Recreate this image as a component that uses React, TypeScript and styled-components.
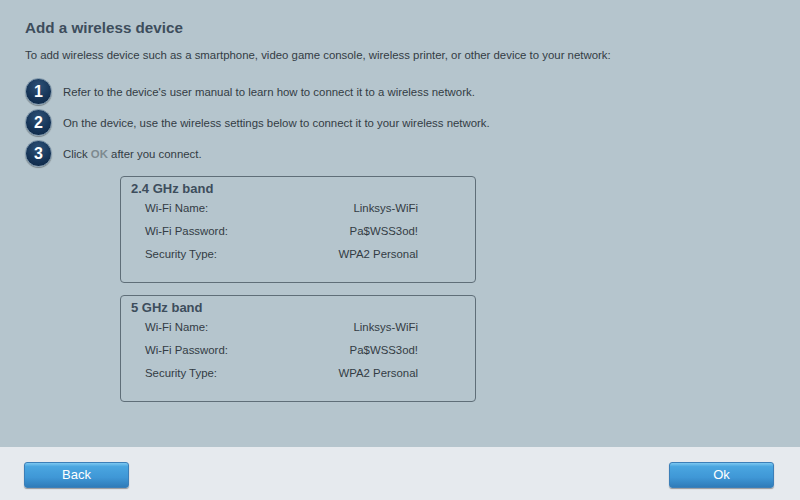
import React from "react";
import styled, { createGlobalStyle } from "styled-components";

const GlobalStyle = createGlobalStyle`
  html, body {
    margin: 0;
    padding: 0;
  }
  body {
    font-family: Arial, "Liberation Sans", sans-serif;
    background: #b5c5cd;
  }
`;

const bands = [
  { title: "2.4 GHz band", name: "Linksys-WiFi", password: "Pa$WSS3od!", security: "WPA2 Personal" },
  { title: "5 GHz band", name: "Linksys-WiFi", password: "Pa$WSS3od!", security: "WPA2 Personal" },
];

export default function App() {
  return (
    <>
      <GlobalStyle />
      <Page>
        <Content>
          <Title>Add a wireless device</Title>
          <Intro>
            To add wireless device such as a smartphone, video game console, wireless printer, or other device to
            your network:
          </Intro>
          <Steps>
            <Step>
              <StepNum>1</StepNum>
              <StepText>Refer to the device's user manual to learn how to connect it to a wireless network.</StepText>
            </Step>
            <Step>
              <StepNum>2</StepNum>
              <StepText>On the device, use the wireless settings below to connect it to your wireless network.</StepText>
            </Step>
            <Step>
              <StepNum>3</StepNum>
              <StepText>
                Click <Hint>OK</Hint> after you connect.
              </StepText>
            </Step>
          </Steps>
          <Bands>
            {bands.map((b) => (
              <BandBox key={b.title}>
                <BandTitle>{b.title}</BandTitle>
                <InfoRow>
                  <Label>Wi-Fi Name:</Label>
                  <Value>{b.name}</Value>
                </InfoRow>
                <InfoRow>
                  <Label>Wi-Fi Password:</Label>
                  <Value>{b.password}</Value>
                </InfoRow>
                <InfoRow>
                  <Label>Security Type:</Label>
                  <Value>{b.security}</Value>
                </InfoRow>
              </BandBox>
            ))}
          </Bands>
        </Content>
        <Footer>
          <Button>Back</Button>
          <Button>Ok</Button>
        </Footer>
      </Page>
    </>
  );
}

const Page = styled.div`
  width: 800px;
  height: 500px;
  display: flex;
  flex-direction: column;
  overflow: hidden;
`;

const Content = styled.div`
  flex: 1;
  padding: 18px 25px 0;
`;

const Title = styled.h1`
  margin: 0;
  font-size: 15.2px;
  line-height: 20px;
  font-weight: bold;
  color: #3d4d5c;
`;

const Intro = styled.p`
  margin: 9px 0 0;
  font-size: 11.4px;
  line-height: 16px;
  color: #333c44;
`;

const Steps = styled.div`
  margin-top: 15px;
  display: flex;
  flex-direction: column;
  gap: 4px;
`;

const Step = styled.div`
  display: flex;
  align-items: center;
  gap: 11px;
`;

const StepNum = styled.div`
  width: 27px;
  height: 27px;
  border-radius: 50%;
  box-sizing: border-box;
  border: 1px solid #7c94a8;
  background: radial-gradient(circle at 50% 30%, #2e5278 0%, #173659 55%, #0c2440 100%);
  box-shadow: 0 1px 1px rgba(0, 0, 0, 0.35);
  color: #fff;
  font-weight: bold;
  font-size: 16px;
  display: flex;
  align-items: center;
  justify-content: center;
`;

const StepText = styled.span`
  font-size: 11.4px;
  color: #333c44;
`;

const Hint = styled.span`
  color: #7d8a90;
  font-weight: bold;
`;

const Bands = styled.div`
  margin: 9px 0 0 95px;
  width: 356px;
  display: flex;
  flex-direction: column;
  gap: 12px;
`;

const BandBox = styled.div`
  height: 107px;
  box-sizing: border-box;
  border: 1px solid #5f6e78;
  border-radius: 4px;
  padding: 4px 57px 0 10px;
  display: flex;
  flex-direction: column;
`;

const BandTitle = styled.div`
  font-size: 13px;
  font-weight: bold;
  line-height: 16px;
  color: #3d4d5c;
`;

const InfoRow = styled.div`
  display: flex;
  justify-content: space-between;
  padding-left: 14px;
  font-size: 11.4px;
  line-height: 23px;
  color: #333c44;
`;

const Label = styled.span``;

const Value = styled.span`
  text-align: right;
`;

const Footer = styled.div`
  height: 53px;
  background: #e6eaee;
  display: flex;
  justify-content: space-between;
  align-items: center;
  padding: 0 26px 0 24px;
`;

const Button = styled.button`
  width: 105px;
  height: 26px;
  border: 1px solid #3c7fb8;
  border-radius: 3px;
  background: linear-gradient(to bottom, #7cc8f0 0%, #4aa6e0 15%, #3f97d6 60%, #2f7cb9 100%);
  box-shadow: 0 1px 1px rgba(0, 0, 0, 0.35);
  color: #fff;
  font-family: Arial, "Liberation Sans", sans-serif;
  font-size: 13px;
  padding: 0;
  margin-top: 2px;
`;
